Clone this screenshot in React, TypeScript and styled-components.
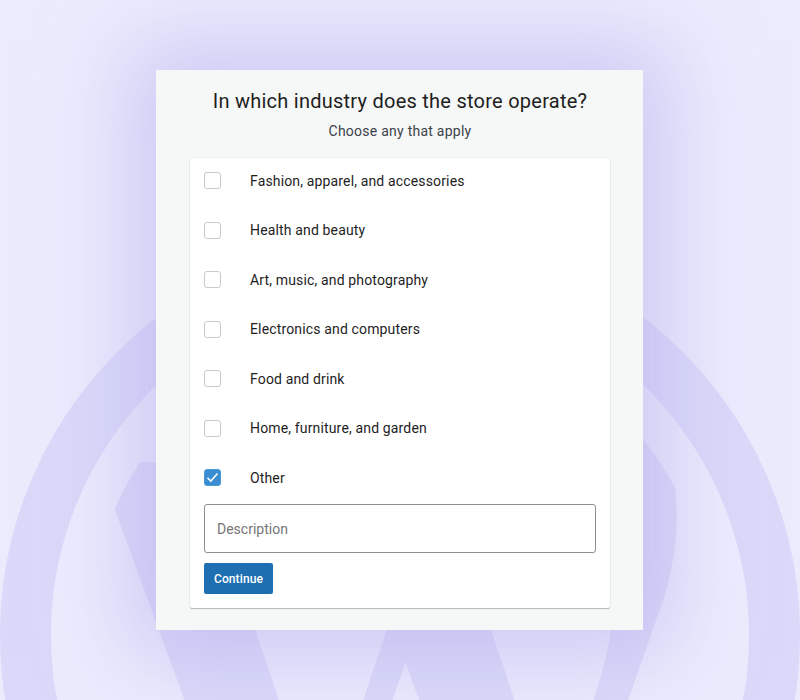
import React, { useState } from 'react';
import styled, { createGlobalStyle } from 'styled-components';
import { SiWordpress } from 'react-icons/si';

const GlobalStyle = createGlobalStyle`
  html, body, #root {
    margin: 0;
    padding: 0;
    height: 100%;
  }
  body {
    font-family: Roboto, 'Noto Sans', sans-serif;
    -webkit-font-smoothing: antialiased;
  }
  * {
    box-sizing: border-box;
  }
`;

const Page = styled.div`
  position: relative;
  width: 800px;
  height: 700px;
  overflow: hidden;
  background: #ecebfd;
  padding: 70px 0 0 156px;
`;

// faded logo behind the card: thick outer ring + the W mark inside
const Ring = styled.div`
  position: absolute;
  left: 0;
  top: 235px;
  width: 800px;
  height: 800px;
  border-radius: 50%;
  border: 51px solid #dbd9f9;
  pointer-events: none;
`;

const Mark = styled.div`
  position: absolute;
  left: 52px;
  top: 287px;
  width: 696px;
  height: 696px;
  color: #dbd9f9;
  clip-path: circle(312px at 50% 50%);
  pointer-events: none;
  svg {
    display: block;
  }
`;

const Card = styled.div`
  position: relative;
  width: 487px;
  padding: 17px 33px 22px 34px;
  background: #f6f7f7;
  box-shadow: 0 0 80px 26px rgba(178, 175, 236, 0.55);
  display: flex;
  flex-direction: column;
  align-items: center;
`;

const Title = styled.h1`
  margin: 0;
  font-size: 20px;
  line-height: 28px;
  font-weight: 400;
  letter-spacing: 0.25px;
  color: #1e1e1e;
`;

const Subtitle = styled.p`
  margin: 6px 0 17px;
  font-size: 14px;
  line-height: 20px;
  letter-spacing: 0.25px;
  color: #3c434a;
`;

const Panel = styled.div`
  align-self: stretch;
  background: #fff;
  padding: 0 14px 14px;
  border-radius: 2px;
  box-shadow: 0 1px 1px rgba(0, 0, 0, 0.25), 0 0 0 1px rgba(0, 0, 0, 0.03);
`;

const Row = styled.label`
  display: flex;
  align-items: center;
  height: 49.5px;
  cursor: pointer;
  &:first-child {
    margin-top: -2px;
  }
`;

const Box = styled.span<{ $checked: boolean }>`
  width: 17px;
  height: 17px;
  border-radius: 3px;
  border: 1px solid ${(p) => (p.$checked ? '#4a9ad6' : '#c8c9cc')};
  background: ${(p) => (p.$checked ? '#3a8dd0' : '#fff')};
  display: flex;
  align-items: center;
  justify-content: center;
  flex: 0 0 auto;
`;

const Label = styled.span`
  margin-left: 29px;
  font-size: 14px;
  letter-spacing: 0.15px;
  color: #1e1e1e;
`;

const Input = styled.input`
  display: block;
  width: 100%;
  height: 49px;
  margin-top: 1.5px;
  padding: 0 12px;
  border: 1px solid #8c8f94;
  border-radius: 3px;
  font-family: inherit;
  font-size: 14px;
  color: #1e1e1e;
  outline: none;
  &::placeholder {
    color: #757575;
  }
`;

const Button = styled.button`
  display: block;
  margin-top: 10px;
  height: 31px;
  padding: 0 10px;
  border: 0;
  border-radius: 2px;
  background: #1e6fb2;
  color: #fff;
  font-family: inherit;
  font-size: 12px;
  font-weight: 500;
  letter-spacing: 0.1px;
  cursor: pointer;
`;

const industries = [
  'Fashion, apparel, and accessories',
  'Health and beauty',
  'Art, music, and photography',
  'Electronics and computers',
  'Food and drink',
  'Home, furniture, and garden',
  'Other',
];

export default function App() {
  const [checked, setChecked] = useState<string[]>(['Other']);

  const toggle = (name: string) =>
    setChecked((c) => (c.includes(name) ? c.filter((x) => x !== name) : [...c, name]));

  return (
    <>
      <GlobalStyle />
      <Page>
        <Ring />
        <Mark>
          <SiWordpress size={696} />
        </Mark>
        <Card>
          <Title>In which industry does the store operate?</Title>
          <Subtitle>Choose any that apply</Subtitle>
          <Panel>
            {industries.map((name) => {
              const on = checked.includes(name);
              return (
                <Row key={name} onClick={() => toggle(name)}>
                  <Box $checked={on}>
                    {on && (
                      <svg width="13" height="11" viewBox="0 0 13 11" fill="none">
                        <path d="M1.5 5.8 L4.8 9 L11.5 1.5" stroke="#fff" strokeWidth="1.6" />
                      </svg>
                    )}
                  </Box>
                  <Label>{name}</Label>
                </Row>
              );
            })}
            {checked.includes('Other') && <Input placeholder="Description" />}
            <Button>Continue</Button>
          </Panel>
        </Card>
      </Page>
    </>
  );
}
